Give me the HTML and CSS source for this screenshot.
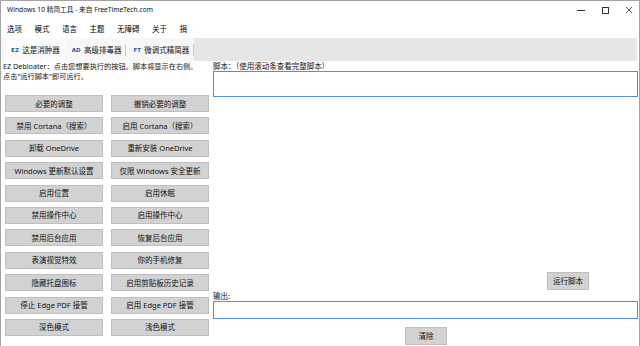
FILE: index.html
```html
<!DOCTYPE html>
<html lang="zh-CN">
<head>
  <meta charset="UTF-8" />
  <title>Windows 10 精简工具 - 来自 FreeTimeTech.com</title>
  <link rel="stylesheet" href="styles.css">
</head>
<body>
  <div class="window">
    <div class="titlebar">
      <span class="title">Windows 10 精简工具 - 来自 FreeTimeTech.com</span>
      <div class="controls">
        <span class="ctl">
          <svg width="8" height="8" viewBox="0 0 8 8"><path d="M0 4.5H8" stroke="#333" stroke-width="1"/></svg>
        </span>
        <span class="ctl">
          <svg width="8" height="8" viewBox="0 0 8 8"><rect x="1.5" y="1.5" width="6" height="6" fill="none" stroke="#333" stroke-width="1"/></svg>
        </span>
        <span class="ctl">
          <svg width="8" height="8" viewBox="0 0 8 8"><path d="M1 1L7 7M7 1L1 7" stroke="#444" stroke-width="0.9"/></svg>
        </span>
      </div>
    </div>

    <div class="menubar">
      <span>选项</span>
      <span>模式</span>
      <span>语言</span>
      <span>主题</span>
      <span>无障碍</span>
      <span>关于</span>
      <span>捐</span>
    </div>

    <div class="tabstrip">
      <div class="tabs">
        <div class="tab active"><span class="badge">EZ</span>这是消肿器</div>
        <div class="tab sep"><span class="badge">AD</span>高级排毒器</div>
        <div class="tab sep"><span class="badge">FT</span>微调式精简器</div>
      </div>
    </div>

    <div class="content">
      <div class="left">
        <p class="intro">EZ Debloater：点击您想要执行的按钮。脚本将显示在右侧。<br>点击"运行脚本"即可运行。</p>
        <div class="btn-grid">
          <button class="btn">必要的调整</button>
          <button class="btn">撤销必要的调整</button>
          <button class="btn">禁用 Cortana（搜索）</button>
          <button class="btn">启用 Cortana（搜索）</button>
          <button class="btn">卸载 OneDrive</button>
          <button class="btn">重新安装 OneDrive</button>
          <button class="btn">Windows 更新默认设置</button>
          <button class="btn">仅限 Windows 安全更新</button>
          <button class="btn">启用位置</button>
          <button class="btn">启用休眠</button>
          <button class="btn">禁用操作中心</button>
          <button class="btn">启用操作中心</button>
          <button class="btn">禁用后台应用</button>
          <button class="btn">恢复后台应用</button>
          <button class="btn">表演视觉特效</button>
          <button class="btn">你的手机修复</button>
          <button class="btn">隐藏托盘图标</button>
          <button class="btn">启用剪贴板历史记录</button>
          <button class="btn">停止 Edge PDF 接管</button>
          <button class="btn">启用 Edge PDF 接管</button>
          <button class="btn">深色模式</button>
          <button class="btn">浅色模式</button>
        </div>
      </div>

      <div class="right">
        <div class="label">脚本：（使用滚动条查看完整脚本）</div>
        <div class="field script-box"></div>
        <button class="btn small run">运行脚本</button>
        <div class="label">输出:</div>
        <div class="field output-box"></div>
        <button class="btn small clear">清除</button>
      </div>
    </div>
  </div>
</body>
</html>
```

FILE: styles.css
```css
* {
  box-sizing: border-box;
}

body {
  margin: 0;
  width: 640px;
  height: 346px;
  overflow: hidden;
  background: #fff;
  font-family: "Noto Sans", "Noto Sans CJK SC", sans-serif;
  font-size: 7.5px;
  color: #000;
}

.window {
  width: 640px;
  height: 346px;
  border: 1px solid #a4a4a4;
  border-bottom: none;
  overflow: hidden;
}

/* title bar */
.titlebar {
  height: 18px;
  display: flex;
  align-items: center;
  padding-left: 6px;
}

.title {
  font-size: 6.7px;
  line-height: 10px;
  color: #111;
}

.controls {
  margin-left: auto;
  margin-right: -2px;
  display: flex;
}

.ctl {
  width: 24px;
  height: 18px;
  display: flex;
  align-items: center;
  justify-content: center;
}

/* menu */
.menubar {
  height: 19px;
  display: flex;
  align-items: center;
  gap: 12.5px;
  padding-left: 6px;
}

/* tabs */
.tabstrip {
  height: 23px;
  background: #e6e6e6;
  margin-right: 2px;
  display: flex;
}

.tabs {
  display: flex;
  background: #f7f7f7;
  padding-left: 3px;
}

.tab {
  display: flex;
  align-items: center;
  gap: 3px;
  padding: 0 5px 0 7px;
  position: relative;
  color: #111;
}

.tab.active {
  background: #fbfbfb;
}

.tab.sep::after {
  content: "";
  position: absolute;
  right: 0;
  top: 6px;
  width: 1px;
  height: 12px;
  background: #c9c9c9;
}

.badge {
  font-family: "DejaVu Sans", sans-serif;
  font-weight: bold;
  font-size: 5.5px;
  color: #1f5f9f;
  letter-spacing: 0.2px;
}

/* main area */
.content {
  display: grid;
  grid-template-columns: 212px 1fr;
}

.left {
  padding-left: 2px;
}

.intro {
  margin: 0;
  font-size: 7.2px;
  line-height: 10px;
  color: #111;
}

.btn-grid {
  margin: 14px 0 0 2px;
  display: grid;
  grid-template-columns: 98px 98px;
  column-gap: 8px;
  row-gap: 5.4px;
}

.btn {
  height: 17px;
  padding: 0;
  background: #d2d2d2;
  border: 1px solid #bfbfbf;
  font-family: inherit;
  font-size: 7.5px;
  color: #111;
  line-height: 10px;
}

.right {
  display: flex;
  flex-direction: column;
  align-items: flex-start;
  padding-right: 1px;
}

.label {
  line-height: 10px;
  color: #111;
}

.field {
  width: 100%;
  border: 1px solid #5790c4;
  background: #fff;
}

.script-box {
  height: 26px;
}

.output-box {
  height: 18px;
}

.btn.small {
  width: 42px;
  height: 18px;
}

.run {
  margin: 175px 0 1px 334px;
}

.clear {
  margin: 8px 0 0 192px;
}
```
